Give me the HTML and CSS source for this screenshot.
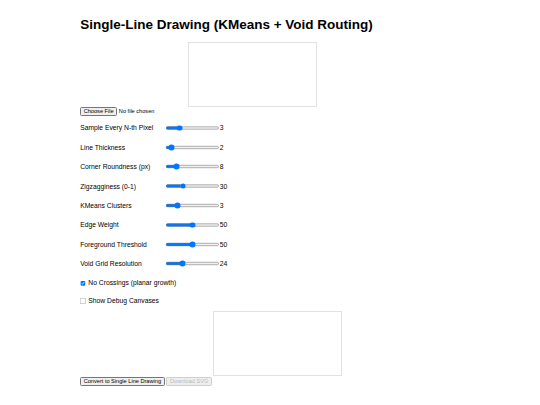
FILE: index.html
```html
<!DOCTYPE html>
<html>
<head>
<meta charset="utf-8">
<title>Single-Line Drawing</title>
<link rel="stylesheet" href="styles.css">
</head>
<body>
<div class="app">
  <div class="container">
    <h1 class="title">Single-Line Drawing (KMeans + Void Routing)</h1>
    <canvas class="preview preview-input" width="300" height="150"></canvas>
    <div class="file-line"><input type="file" class="file"></div>

    <div class="row"><label class="lbl">Sample Every N-th Pixel</label><input type="range" class="slider" min="1" max="10" value="3"><span class="val">3</span></div>
    <div class="row"><label class="lbl">Line Thickness</label><input type="range" class="slider" min="1" max="20" value="2"><span class="val">2</span></div>
    <div class="row"><label class="lbl">Corner Roundness (px)</label><input type="range" class="slider" min="0" max="50" value="8"><span class="val">8</span></div>
    <div class="row"><label class="lbl">Zigzagginess (0-1)</label><input type="range" class="slider" min="0" max="100" value="30"><span class="val">30</span></div>
    <div class="row"><label class="lbl">KMeans Clusters</label><input type="range" class="slider" min="1" max="12" value="3"><span class="val">3</span></div>
    <div class="row"><label class="lbl">Edge Weight</label><input type="range" class="slider" min="0" max="100" value="50"><span class="val">50</span></div>
    <div class="row"><label class="lbl">Foreground Threshold</label><input type="range" class="slider" min="0" max="100" value="50"><span class="val">50</span></div>
    <div class="row"><label class="lbl">Void Grid Resolution</label><input type="range" class="slider" min="8" max="64" value="24"><span class="val">24</span></div>

    <div class="check-row check-first"><label><input type="checkbox" class="check" checked> No Crossings (planar growth)</label></div>
    <div class="check-row"><label><input type="checkbox" class="check"> Show Debug Canvases</label></div>

    <canvas class="preview preview-output" width="300" height="150"></canvas>
    <div class="buttons"><button class="btn">Convert to Single Line Drawing</button> <button class="btn" disabled>Download SVG</button></div>
  </div>
</div>
</body>
</html>
```
FILE: styles.css
```css
html, body {
  margin: 0;
  padding: 0;
  background: #fff;
}
.app {
  zoom: 0.421875;
  font-family: "Liberation Sans", Arial, sans-serif;
  font-size: 16px;
  color: #000;
}
.container {
  max-width: 900px;
  margin: 0 auto;
  padding: 20px 0;
}
.title {
  font-size: 32px;
  font-weight: bold;
  margin: 21.44px 0;
}
.preview {
  display: block;
  width: 300px;
  height: 150px;
  border: 1px solid #e2e2e2;
}
.preview-input {
  margin-left: 256px;
}
.preview-output {
  margin-left: 315px;
  margin-top: 14px;
}
.file-line {
  height: 15px;
}
.file {
  font-family: "Liberation Sans", Arial, sans-serif;
  font-size: 13.33px;
}
.row {
  display: flex;
  align-items: center;
  height: 22px;
  margin-top: 24px;
}
.lbl {
  width: 200px;
  flex: none;
}
.slider {
  width: 129px;
  margin: 2px 0 2px 2px;
}
.check-row {
  display: flex;
  align-items: center;
  height: 19px;
  margin-top: 23px;
}
.check-first {
  margin-top: 26px;
}
.check {
  margin: 3px 2px 3px 0;
  vertical-align: -2px;
}
.buttons {
  margin-top: 1px;
}
.btn {
  font-family: "Liberation Sans", Arial, sans-serif;
  font-size: 13.33px;
}
```
